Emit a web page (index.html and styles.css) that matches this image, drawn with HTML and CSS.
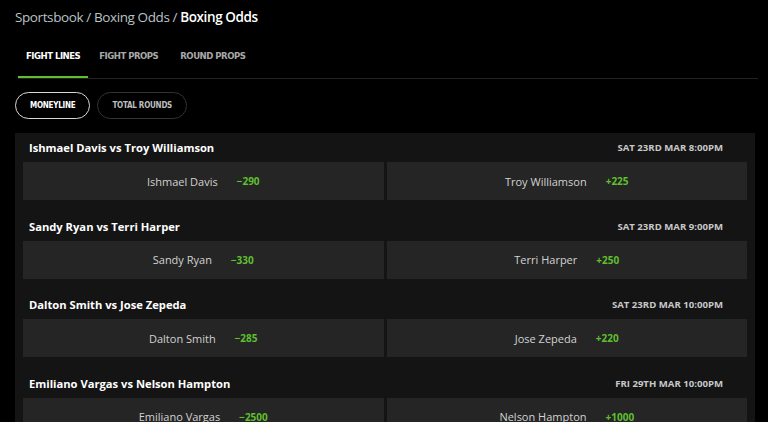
FILE: index.html
```html
<!DOCTYPE html>
<html>
<head>
<meta charset="utf-8">
<link rel="stylesheet" href="styles.css">
</head>
<body>
<div class="page">
  <div class="crumbs"><span class="crumb">Sportsbook</span> <span class="crumb">/</span> <span class="crumb">Boxing Odds</span> <span class="crumb">/</span> <span class="current">Boxing Odds</span></div>
  <div class="tabs">
    <div class="tab active">FIGHT LINES</div>
    <div class="tab">FIGHT PROPS</div>
    <div class="tab">ROUND PROPS</div>
  </div>
  <div class="pills">
    <div class="pill active">MONEYLINE</div>
    <div class="pill">TOTAL ROUNDS</div>
  </div>
  <div class="card">
    <div class="match">
      <div class="match-head"><span class="title">Ishmael Davis vs Troy Williamson</span><span class="date">SAT 23RD MAR 8:00PM</span></div>
      <div class="odds-row">
        <div class="odd"><span class="name">Ishmael Davis</span><span class="price">−290</span></div>
        <div class="odd"><span class="name">Troy Williamson</span><span class="price">+225</span></div>
      </div>
    </div>
    <div class="match">
      <div class="match-head"><span class="title">Sandy Ryan vs Terri Harper</span><span class="date">SAT 23RD MAR 9:00PM</span></div>
      <div class="odds-row">
        <div class="odd"><span class="name">Sandy Ryan</span><span class="price">−330</span></div>
        <div class="odd"><span class="name">Terri Harper</span><span class="price">+250</span></div>
      </div>
    </div>
    <div class="match">
      <div class="match-head"><span class="title">Dalton Smith vs Jose Zepeda</span><span class="date">SAT 23RD MAR 10:00PM</span></div>
      <div class="odds-row">
        <div class="odd"><span class="name">Dalton Smith</span><span class="price">−285</span></div>
        <div class="odd"><span class="name">Jose Zepeda</span><span class="price">+220</span></div>
      </div>
    </div>
    <div class="match">
      <div class="match-head"><span class="title">Emiliano Vargas vs Nelson Hampton</span><span class="date">FRI 29TH MAR 10:00PM</span></div>
      <div class="odds-row">
        <div class="odd"><span class="name">Emiliano Vargas</span><span class="price">−2500</span></div>
        <div class="odd"><span class="name">Nelson Hampton</span><span class="price">+1000</span></div>
      </div>
    </div>
  </div>
</div>
</body>
</html>
```
FILE: styles.css
```css
* { box-sizing: border-box; }
html, body {
  margin: 0;
  padding: 0;
  background: #000;
  height: 422px;
  overflow: hidden;
}
body {
  font-family: "Open Sans", "Liberation Sans", sans-serif;
  color: #fff;
}
.page {
  padding: 7px 10px 0 15px;
}
.crumbs {
  font-size: 13.5px;
  line-height: 20px;
  height: 20px;
  letter-spacing: -0.4px;
}
.crumb { color: #b9c3c8; }
.current { color: #fff; font-weight: 600; }

.tabs {
  display: flex;
  margin: 22px 0 0 3px;
  border-bottom: 1px solid #222;
}
.tab {
  font-family: "DejaVu Sans Condensed", "DejaVu Sans", sans-serif;
  font-stretch: condensed;
  font-weight: bold;
  font-size: 9.5px;
  letter-spacing: -0.5px;
  color: #a9a9a9;
  padding: 0 11px;
  height: 29px;
  line-height: 14px;
}
.tab:first-child { padding-left: 8px; padding-right: 8px; }
.tab.active {
  color: #fff;
  border-bottom: 2px solid #5fbf2f;
  margin-bottom: -1px;
}

.pills {
  display: flex;
  gap: 7px;
  margin-top: 13px;
}
.pill {
  height: 27px;
  line-height: 25px;
  border: 1px solid #333;
  border-radius: 14px;
  padding: 0 14px;
  font-family: "DejaVu Sans Condensed", "DejaVu Sans", sans-serif;
  font-stretch: condensed;
  font-weight: bold;
  font-size: 8px;
  letter-spacing: -0.25px;
  color: #bdbdbd;
}
.pill.active {
  border-color: #d8d8d8;
  color: #fff;
}

.card {
  margin-top: 14px;
  background: #141414;
  padding: 0 8px;
  width: 740px;
}
.match {
  height: 78.67px;
}
.match-head {
  height: 29px;
  display: flex;
  justify-content: space-between;
  align-items: center;
  padding: 0 24px 0 6px;
}
.title {
  font-size: 11.2px;
  font-weight: bold;
  color: #fff;
}
.date {
  font-size: 9.6px;
  font-weight: bold;
  color: #c8c8c8;
}
.odds-row {
  display: flex;
  gap: 3px;
  height: 38px;
}
.odd {
  flex: 1;
  background: #252525;
  display: flex;
  align-items: center;
  justify-content: center;
  gap: 19px;
}
.name {
  font-size: 11px;
  color: #d2d2d2;
}
.price {
  font-size: 10px;
  font-weight: bold;
  color: #5fbf2f;
}
```
